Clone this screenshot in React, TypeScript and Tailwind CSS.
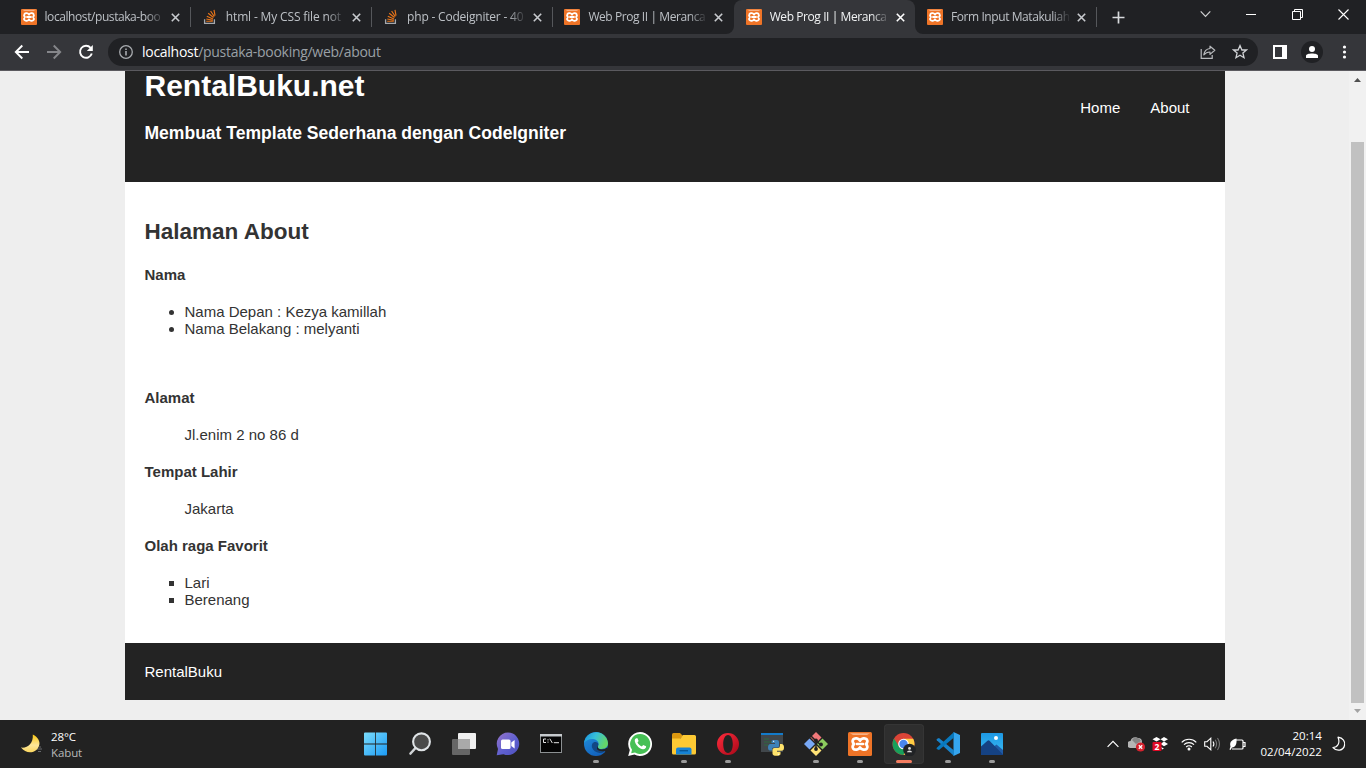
import React from "react";

const ui = "font-['Open_Sans','Noto_Sans',sans-serif]";

function Xampp({ size }: { size: number }) {
  return (
    <svg width={size} height={size} viewBox="0 0 24 24" className="shrink-0">
      <rect width="24" height="24" rx="1.5" fill="#ef7427" />
      <path d="M2 1.2H22L19 3H5Z" fill="#f8b184" />
      <path
        d="M12 8.6C10.8 6 6.6 5.6 5.2 7.4C4.2 8.9 4.7 10.6 6 12C4.7 13.4 4.2 15.1 5.2 16.6C6.6 18.4 10.8 18 12 15.4C13.2 18 17.4 18.4 18.8 16.6C19.8 15.1 19.3 13.4 18 12C19.3 10.6 19.8 8.9 18.8 7.4C17.4 5.6 13.2 6 12 8.6ZM9 12H15"
        fill="none"
        stroke="#fff"
        strokeWidth="2.7"
        strokeLinejoin="round"
        strokeLinecap="round"
      />
    </svg>
  );
}

function StackOverflow() {
  return (
    <svg width="16" height="16" viewBox="0 0 16 16" fill="none" className="shrink-0">
      <path d="M2.6 10.3V14.4H12.4V10.3" stroke="#a5a8ac" strokeWidth="1.3" />
      <path
        d="M4.2 12.2H10.8M4.3 10L10.8 11.2M4.8 7.2L11 10M6.2 4.2L11.5 8.5M8.6 2L12.3 7.5M12 .8L13 6.7"
        stroke="#e8751a"
        strokeWidth="1.15"
      />
    </svg>
  );
}

type TabInfo = { title: string; so?: boolean; active?: boolean; sep?: boolean; spacing: string };
const tabs: TabInfo[] = [
  { title: "localhost/pustaka-boo", sep: true, spacing: "tracking-[-0.42px]" },
  { title: "html - My CSS file not", so: true, sep: true, spacing: "tracking-[-0.15px]" },
  { title: "php - Codeigniter - 40", so: true, sep: true, spacing: "tracking-[-0.2px]" },
  { title: "Web Prog II | Meranca", spacing: "tracking-[-0.42px]" },
  { title: "Web Prog II | Meranca", active: true, spacing: "tracking-[-0.42px]" },
  { title: "Form Input Matakuliah", sep: true, spacing: "tracking-[-0.42px]" },
];

function Tab({ t }: { t: TabInfo }) {
  return (
    <div
      className={
        "relative flex h-[34px] w-[181.3px] shrink-0 items-center pl-3 " +
        (t.active ? "rounded-t-lg bg-[#35363a] text-[#f1f3f4]" : "text-[#bdc1c6]")
      }
    >
      {t.active && (
        <>
          <svg width="8" height="8" className="absolute bottom-0 -left-2">
            <path d="M8 0V8H0A8 8 0 0 0 8 0" fill="#35363a" />
          </svg>
          <svg width="8" height="8" className="absolute -right-2 bottom-0">
            <path d="M0 0V8H8A8 8 0 0 1 0 0" fill="#35363a" />
          </svg>
        </>
      )}
      {t.so ? <StackOverflow /> : <Xampp size={16} />}
      <span
        className={
          "ml-2 w-[120px] text-[12px] leading-4 whitespace-nowrap [mask-image:linear-gradient(to_right,black_84%,transparent)] " +
          t.spacing
        }
      >
        {t.title}
      </span>
      <svg width="9" height="9" viewBox="0 0 9 9" className="ml-1.5 shrink-0">
        <path d="M.8 .8L8.2 8.2M8.2 .8L.8 8.2" stroke={t.active ? "#fff" : "#c8cbcf"} strokeWidth="1.6" />
      </svg>
      {t.sep && <i className="absolute top-[7px] -right-[1px] h-5 w-px bg-[#55575b]" />}
    </div>
  );
}

function TabStrip() {
  return (
    <div className="flex h-[34px] bg-[#202124] pl-[8.5px]">
      {tabs.map((t, i) => (
        <Tab key={i} t={t} />
      ))}
      <div className="flex flex-1 items-center pl-[16px]">
        <svg width="13" height="13">
          <path d="M6.5 .5V12.5M.5 6.5H12.5" stroke="#d8dadd" strokeWidth="1.7" />
        </svg>
      </div>
      <div className="flex h-7">
        <div className="flex w-[46px] items-center justify-center">
          <svg width="11" height="8" fill="none">
            <path d="M.7 1.3L5.5 6.3L10.3 1.3" stroke="#d0d0d2" strokeWidth="1.2" />
          </svg>
        </div>
        <div className="flex w-[46px] items-center justify-center">
          <i className="mt-px h-px w-[10px] bg-white" />
        </div>
        <div className="flex w-[46px] items-center justify-center">
          <svg width="11" height="11" fill="none" stroke="#fff">
            <path d="M.5 2.5H8.5V10.5H.5ZM2.5 2.5V.5H10.5V8.5H8.5" />
          </svg>
        </div>
        <div className="flex w-[46px] items-center justify-center">
          <svg width="11" height="11" stroke="#fff" strokeWidth="1.1">
            <path d="M.5 .5L10.5 10.5M10.5 .5L.5 10.5" />
          </svg>
        </div>
      </div>
    </div>
  );
}

function Toolbar() {
  return (
    <div className="flex h-[37px] items-center border-b border-[#5b5a5f] bg-[#35363a] pr-3 pl-3.5">
      <svg width="16" height="16" viewBox="0 0 16 16" fill="none" stroke="#fff" strokeWidth="1.9">
        <path d="M15 8H2M8.3 1.5L1.8 8L8.3 14.5" />
      </svg>
      <svg width="16" height="16" viewBox="0 0 16 16" fill="none" stroke="#85868a" strokeWidth="1.9" className="ml-4">
        <path d="M1 8H14M7.7 1.5L14.2 8L7.7 14.5" />
      </svg>
      <svg width="16" height="16" viewBox="0 0 16 16" fill="none" className="ml-4">
        <path d="M12.6 3.8A6 6 0 1 0 13.8 9.5" stroke="#fff" strokeWidth="1.9" />
        <path d="M14.8 1V7H8.8Z" fill="#fff" />
      </svg>
      <div className="ml-[14px] flex h-7 flex-1 items-center rounded-full bg-[#202124] pr-2.5 pl-2.5">
        <svg width="16" height="16" viewBox="0 0 16 16" fill="none">
          <circle cx="8" cy="8" r="6.3" stroke="#a8abaf" strokeWidth="1.3" />
          <path d="M8 7V11.5M8 4.4V5.9" stroke="#a8abaf" strokeWidth="1.6" />
        </svg>
        <span className="ml-2 flex-1 text-[14px] leading-5 tracking-[-0.28px] text-[#9aa0a6]">
          <span className="text-white">localhost</span>/pustaka-booking/web/about
        </span>
        <svg width="16" height="16" viewBox="0 0 16 16" fill="none" stroke="#b8babd" strokeWidth="1.2">
          <path d="M1.2 5V14.4H12.2V11" />
          <path d="M10 2.2L14.8 6.3L10 10.4V8C7.5 8 5.5 8.8 3.8 10.8C4.3 7.4 6.2 4.9 10 4.5Z" strokeLinejoin="round" />
        </svg>
        <svg width="16" height="16" viewBox="0 0 16 16" fill="none" className="ml-4">
          <path
            d="M8 1.6L9.9 6H14.5L10.9 9L12 13.7L8 11.2L4 13.7L5.1 9L1.5 6H6.1Z"
            stroke="#d0d2d5"
            strokeWidth="1.3"
          />
        </svg>
      </div>
      <svg width="14" height="14" className="ml-[15px]">
        <path d="M0 0H14V14H0ZM2 2V12H9V2Z" fill="#fff" fillRule="evenodd" />
      </svg>
      <div className="ml-3.5 flex size-[22px] items-center justify-center rounded-full bg-[#202124]">
        <svg width="12" height="12" fill="#fff">
          <circle cx="6" cy="3" r="3" />
          <path d="M0 12V10C0 6.8 12 6.8 12 10V12Z" />
        </svg>
      </div>
      <svg width="20" height="14" fill="#fff" className="ml-[11px]">
        <circle cx="10.5" cy="2" r="1.6" />
        <circle cx="10.5" cy="7" r="1.6" />
        <circle cx="10.5" cy="12" r="1.6" />
      </svg>
    </div>
  );
}

function Page() {
  return (
    <div className="flex h-[649px] bg-[#eeeeee]">
      <main className="ml-[125px] w-[1100px] overflow-hidden font-['Liberation_Sans',Arial,sans-serif] text-[15px] leading-[17px] text-[#333]">
        <header className="flex h-[111px] justify-between bg-[#232323] pr-[35.5px] pl-[19.5px] text-white">
          <div className="-mt-0.5">
            <h1 className="text-[30px] leading-[34px] font-bold">RentalBuku.net</h1>
            <h3 className="mt-[20px] text-[17.55px] leading-5 font-bold">Membuat Template Sederhana dengan CodeIgniter</h3>
          </div>
          <nav className="mt-7 flex gap-[30px]">
            <span>Home</span>
            <span>About</span>
          </nav>
        </header>
        <section className="h-[461px] bg-white px-[19.5px] pt-[37px]">
          <h2 className="text-[22.5px] leading-[26px] font-bold">Halaman About</h2>
          <h4 className="mt-[21px] font-bold">Nama</h4>
          <ul className="mt-5 list-disc pl-10">
            <li>Nama Depan : Kezya kamillah</li>
            <li>Nama Belakang : melyanti</li>
          </ul>
          <h4 className="mt-[52px] font-bold">Alamat</h4>
          <p className="mt-5 pl-10">Jl.enim 2 no 86 d</p>
          <h4 className="mt-5 font-bold">Tempat Lahir</h4>
          <p className="mt-5 pl-10">Jakarta</p>
          <h4 className="mt-5 font-bold">Olah raga Favorit</h4>
          <ul className="mt-5 list-[square] pl-10">
            <li>Lari</li>
            <li>Berenang</li>
          </ul>
        </section>
        <footer className="h-[57px] bg-[#232323] px-[19.5px] pt-5 text-white">RentalBuku</footer>
      </main>
      <div className="ml-auto flex w-[17px] flex-col items-center bg-[#f1f1f1]">
        <svg width="17" height="17">
          <path d="M5 11L8.5 7L12 11Z" fill="#505050" />
        </svg>
        <div className="mt-[54px] h-[561px] w-[13px] bg-[#c1c1c1]" />
        <svg width="17" height="17">
          <path d="M5 6L8.5 10L12 6Z" fill="#a3a3a3" />
        </svg>
      </div>
    </div>
  );
}

const apps: { icon: React.ReactNode; run?: boolean; active?: boolean }[] = [
  {
    icon: (
      <>
        <defs>
          <linearGradient id="win" x1="0" y1="0" x2="1" y2="1">
            <stop offset="0" stopColor="#7bdcfb" />
            <stop offset="1" stopColor="#1b9af5" />
          </linearGradient>
        </defs>
        <path d="M0 1.5Q0 .5 1 .5H11.2V11.6H0ZM12 .5H22Q23 .5 23 1.5V11.6H12ZM0 12.5H11.2V23.5H1Q0 23.5 0 22.5ZM12 12.5H23V22.5Q23 23.5 22 23.5H12Z" fill="url(#win)" />
      </>
    ),
  },
  {
    icon: (
      <>
        <path d="M7.5 16L2.5 21.5" stroke="#d0d3d6" strokeWidth="2.6" strokeLinecap="round" />
        <circle cx="13.5" cy="9.8" r="8.4" fill="#4a4a4a" stroke="#dfe3e6" strokeWidth="2.1" />
      </>
    ),
  },
  {
    icon: (
      <>
        <rect x="6" y="1" width="18" height="16" rx="1" fill="#f0f0f0" />
        <rect x="0" y="7" width="18" height="16" rx="1" fill="#666" />
        <path d="M6 7H18V17H6Z" fill="#a9a9a9" />
      </>
    ),
  },
  {
    icon: (
      <>
        <defs>
          <linearGradient id="chat" x1="0" y1="0" x2="1" y2="1">
            <stop offset="0" stopColor="#9674ca" />
            <stop offset=".55" stopColor="#5f60cf" />
            <stop offset="1" stopColor="#4d50bd" />
          </linearGradient>
        </defs>
        <path d="M12 .5A11.3 11.3 0 1 1 7.5 22.2L.7 23.2L2 17A11.3 11.3 0 0 1 12 .5Z" fill="url(#chat)" />
        <rect x="5" y="7.5" width="9.5" height="9.5" rx="1.5" fill="#fff" />
        <path d="M15.3 10.6L18.6 8V16.5L15.3 14Z" fill="#fff" />
      </>
    ),
  },
  {
    icon: (
      <>
        <rect x="0.5" y="2.5" width="21" height="18" fill="#050505" stroke="#8c9092" />
        <path d="M0 2H22V4.500H0Z" fill="#c7cbce" />
        <path d="M6 7H3.500V10.500H6M8 7.200V8.400M8 9.600V10.700M9.800 6.700L12.300 11M13.800 10.700H19" stroke="#e4e4e4" fill="none" />
      </>
    ),
  },
  {
    run: true,
    icon: (
      <>
        <defs>
          <linearGradient id="edge" x1="0" y1="0" x2="1" y2=".35">
            <stop offset="0" stopColor="#1791df" />
            <stop offset=".5" stopColor="#37bfd8" />
            <stop offset="1" stopColor="#64d568" />
          </linearGradient>
          <linearGradient id="edge2" x1="0" y1="0" x2=".6" y2="1">
            <stop offset="0" stopColor="#2292dd" />
            <stop offset="1" stopColor="#1261bd" />
          </linearGradient>
        </defs>
        <circle cx="12" cy="12" r="12" fill="url(#edge2)" />
        <path d="M.1 11A12 12 0 0 1 24 11.3C24 15 21 17 17.5 17C14 17 13 15.5 14.3 13.5C15.5 10.5 13 7.5 9 7C5 6.7 1.5 8.5 .1 11Z" fill="url(#edge)" />
        <path d="M8 15.5C7.3 12 9 9.8 11.7 10C14 10.2 15 12 14 14C13.5 16 15 17.6 18 17.6C20 17.6 21.5 17 22.3 16.8C21 20 18.5 21.3 15.5 21C12 20.5 9 18.5 8 15.5Z" fill="#124785" />
        <path d="M14 14C13.1 16 14.7 17.6 18 17.6C20.2 17.6 22 16.5 22.7 15.8L23.8 17L22 20L20.5 19C15 20 11 17.5 14 14Z" fill="#222" />
      </>
    ),
  },
  {
    icon: (
      <>
        <path d="M12 0A12 12 0 1 1 6.4 22.6L.2 24L1.8 18A12 12 0 0 1 12 0Z" fill="#fff" />
        <path d="M12.2 2A10 10 0 1 1 7 20.5L3.2 21.3L4 17.8A10 10 0 0 1 12.2 2Z" fill="#46c055" />
        <path d="M8.3 6.2C7 6.5 6.4 8.2 7 10C8.4 13.8 11.5 16.8 15 17.3C17 17.4 18.3 16 18.1 14.3L15.2 12.9L13.8 14.5C11.8 13.7 10.3 12.1 9.5 10.5L10.6 9.1L9.5 6.3Z" fill="#fff" />
      </>
    ),
  },
  {
    run: true,
    icon: (
      <>
        <path d="M0 2.5Q0 1 1.5 1H8L11 4L8 7H0Z" fill="#dc9810" />
        <path d="M0 6.5H8.5L11 3H22.5Q24 3 24 4.5V21Q24 22.5 22.5 22.5H1.5Q0 22.5 0 21Z" fill="#fcc934" />
        <path d="M4 22.5V17.5Q4 15.5 6 15.5H17.5Q19.5 15.5 19.5 17.5V22.5Z" fill="#1683d5" />
        <path d="M7.5 18.7H16" stroke="#075798" strokeWidth="1.4" />
      </>
    ),
  },
  {
    run: true,
    icon: (
      <>
        <defs>
          <linearGradient id="opera" x1="0" y1="0" x2="1" y2="1">
            <stop offset="0" stopColor="#ff2d3d" />
            <stop offset="1" stopColor="#a70718" />
          </linearGradient>
        </defs>
        <path d="M12 1A11 11 0 1 1 12 23A11 11 0 1 1 12 1ZM12 3C9 3 7.2 7 7.2 12C7.2 17 9 21 12 21C15 21 16.8 17 16.8 12C16.8 7 15 3 12 3Z" fillRule="evenodd" fill="url(#opera)" />
      </>
    ),
  },
  {
    icon: (
      <>
        <rect x="1" y="1" width="22" height="19" fill="#41474b" />
        <path d="M1 1H23V3H1Z" fill="#137bca" />
        <path d="M4 7H9M4 10H12M4 13H8" stroke="#2f6a40" strokeWidth="1.2" />
        <path d="M13 8H17Q19 8 19 10V14Q19 15.5 17 15.5H13.5Q12 15.5 12 17V18.5H10Q8 18.5 8 15.5Q8 12 10.5 12H15V11H11.5V9.5Q11.5 8 13 8Z" fill="#3d82b8" />
        <path d="M20 12H21.5Q24 12 24 15.5Q24 18.7 21.5 18.7H17V19.7H20.5V22Q20.5 23.8 16.5 23.8Q12.5 23.8 12.5 21.5V17.8Q12.5 16 14.5 16H18Q20 16 20 14Z" fill="#ffe36b" />
        <path d="M13 9.3H14.2M17.8 22.3H19" stroke="#fff" />
      </>
    ),
  },
  {
    run: true,
    icon: (
      <>
        <path d="M12 0L17.5 5.5L12 11L6.5 5.5Z" fill="#f2787a" />
        <path d="M18.5 6.5L24 12L18.5 17.5L13 12Z" fill="#8ccc5e" />
        <path d="M5.5 6.5L11 12L5.5 17.5L0 12Z" fill="#78a8f5" />
        <path d="M12 13L17.5 18.5L12 24L6.5 18.5Z" fill="#ffe276" />
        <path d="M7 4L12 9V18M12 9L17 13" stroke="#202020" strokeWidth="1.5" fill="none" />
        <circle cx="12" cy="8.500" r="1.900" fill="#202020" />
        <circle cx="12" cy="17" r="1.900" fill="#202020" />
        <circle cx="17" cy="12.500" r="1.900" fill="#202020" />
      </>
    ),
  },
  { run: true, icon: <Xampp size={24} /> },
  {
    active: true,
    icon: (
      <>
        <circle cx="11.5" cy="12" r="11" fill="#db4437" />
        <path d="M2 6.5A11 11 0 0 0 11.5 23L16 14.5L11.5 12L7 14.5Z" fill="#18a05b" />
        <path d="M11.5 6.8H21.2A11 11 0 0 1 11.5 23L16 14.5Z" fill="#ffcd43" />
        <circle cx="11.5" cy="12" r="5.3" fill="#fff" />
        <circle cx="11.5" cy="12" r="4.2" fill="#4886ee" />
        <circle cx="17.5" cy="18" r="6.3" fill="#202225" />
        <circle cx="17.5" cy="16.4" r="1.4" fill="#ddd" />
        <path d="M14.9 20.3Q15 18.4 17.5 18.4T20.1 20.3Z" fill="#ddd" />
      </>
    ),
  },
  {
    run: true,
    icon: (
      <>
        <path d="M17.5 0L24 3V21L17.5 24Z" fill="#35a5ee" />
        <path d="M1.2 6.7L3 6L18 18.5V24L.8 8.3Q0 7.5 1.2 6.7Z" fill="#1883cb" />
        <path d="M1.2 17.3L3 18L18 5.5V0L.8 15.7Q0 16.5 1.2 17.3Z" fill="#0879be" />
      </>
    ),
  },
  {
    run: true,
    icon: (
      <>
        <defs>
          <linearGradient id="photo" x1="0" y1="0" x2="0" y2="1">
            <stop offset="0" stopColor="#1d98e4" />
            <stop offset="1" stopColor="#3bbcf3" />
          </linearGradient>
        </defs>
        <rect x="1" y="1" width="22" height="22" rx="1" fill="url(#photo)" />
        <path d="M12 16L16.500 12.500L23 18V23H12Z" fill="#1f5ba5" />
        <path d="M1 14.500L7.500 8.700Q8.500 8 9.500 8.700L23 22.500V23H1Z" fill="#154283" />
        <circle cx="16" cy="6" r="2" fill="#fff" />
      </>
    ),
  },
];

function Taskbar() {
  return (
    <div className="flex h-12 items-center bg-[#222222] text-white">
      <div className="flex w-[353.5px] items-center pl-[21px]">
        <svg width="24" height="22" viewBox="0 0 24 22">
          <defs>
            <linearGradient id="moon" x1="0" y1="0" x2="0" y2="1">
              <stop offset="0" stopColor="#fac60f" />
              <stop offset=".6" stopColor="#fce69a" />
              <stop offset="1" stopColor="#fbd65d" />
            </linearGradient>
          </defs>
          <path d="M16 16H21M17 18.5H20M18 14H20" stroke="#66696c" strokeWidth="1.2" fill="none" />
          <path d="M11.8 1.5C17 4 20 9 17.8 13.5C15 20.5 5 21.500 0 14.500C6 15.500 12.500 11 11.800 1.500Z" fill="url(#moon)" />
        </svg>
        <div className="mt-0.5 ml-[6px] text-[11.5px] leading-4 tracking-[-0.1px]">
          <div>28°C</div>
          <div className="text-[#b9b9b9]">Kabut</div>
        </div>
      </div>
      {apps.map((a, i) => (
        <div key={i} className="flex h-12 w-11 shrink-0 items-center justify-center">
          <div
            className={
              "relative flex h-10 w-10 items-center justify-center rounded " +
              (a.active ? "bg-[#2e2e2e] ring-1 ring-[#353535] ring-inset" : "")
            }
          >
            <svg width="24" height="24" viewBox="0 0 24 24">
              {a.icon}
            </svg>
            {a.run && <i className="absolute bottom-[1px] left-[17px] h-[3px] w-[6px] rounded-full bg-[#9b9b9b]" />}
            {a.active && <i className="absolute bottom-[1px] left-3 h-[3px] w-4 rounded-full bg-[#f47d61]" />}
          </div>
        </div>
      ))}
      <div className="ml-auto flex items-center pr-[20px]">
        <svg width="12" height="8" fill="none">
          <path d="M.6 6.8L6 1.3L11.4 6.8" stroke="#fff" strokeWidth="1.2" />
        </svg>
        <svg width="18" height="16" viewBox="0 0 18 16" className="ml-[9px]">
          <path d="M3 12A3.500 3.500 0 0 1 2.500 5A5 5 0 0 1 10 2A4 4 0 0 1 14 6V12Z" fill="#b5b5b5" />
          <path d="M4 4A5 5 0 0 1 13 5L8 8Z" fill="#858585" />
          <circle cx="12.500" cy="11" r="4.600" fill="#d5222e" />
          <path d="M10.800 9.300L14.200 12.700M14.200 9.300L10.800 12.700" stroke="#fff" strokeWidth="1.300" />
        </svg>
        <svg width="17" height="16" viewBox="0 0 17 16" className="ml-[6px]">
          <path d="M4.500 1L8.500 3.200L4.500 5.500L.5 3.200ZM12 1L16 3.200L12 5.500L8.500 3.200ZM12 5.500L16 8L12 10.200L8.500 8ZM9 11L12 12.500L10 13.500Z" fill="#fff" />
          <rect x=".5" y="6" width="9" height="9" rx="1" fill="#df0a25" />
          <text x="5" y="13.800" textAnchor="middle" fontSize="8.500" fontWeight="700" fill="#fff" fontFamily="Open Sans">
            2
          </text>
        </svg>
        <svg width="16" height="14" viewBox="0 0 16 14" fill="none" stroke="#fff" strokeWidth="1.200" className="ml-[12px]">
          <path d="M.7 5.300A10.300 10.300 0 0 1 15.300 5.300M3 7.700A7 7 0 0 1 13 7.700M5.200 10A4 4 0 0 1 10.800 10" />
          <circle cx="8" cy="12" r=".9" fill="#fff" />
        </svg>
        <svg width="17" height="14" viewBox="0 0 17 14" fill="none" stroke="#fff" strokeWidth="1.100" className="ml-[7px]">
          <path d="M.7 4.700H3L6.800 1.200V12.800L3 9.300H.7Z" />
          <path d="M9 4.500Q10.800 7 9 9.500" />
          <path d="M11.200 2.800Q14 7 11.200 11.200M13.500 1Q17.500 7 13.500 13" stroke="#777" />
        </svg>
        <svg width="17" height="13" viewBox="0 0 17 13" fill="none" className="ml-[8px]">
          <path d="M6 2H13Q14 2 14 3V10Q14 11 13 11H3M14.500 4.500H16V8.500H14.500" stroke="#fff" strokeWidth="1.200" />
          <path d="M7.500 .5C2 2 .5 4.500 1.500 8.500L.5 11.500L1.500 12L3 9.500C6.500 9.500 8 6 7.500 .5Z" fill="#fff" />
        </svg>
        <div className="ml-[10px] w-[66px] text-right text-[11.5px] leading-4 tracking-[0.05px]">
          <div>20:14</div>
          <div>02/04/2022</div>
        </div>
        <svg width="14" height="16" viewBox="0 0 14 16" fill="none" className="ml-[10px]">
          <path d="M6 1.200C11 2 13.500 5.500 12.500 9.500C11.300 14.500 5 16 1 11.500C5.500 11.500 8.500 7 6 1.200Z" stroke="#fff" strokeWidth="1.200" strokeLinejoin="round" />
        </svg>
      </div>
    </div>
  );
}

export default function App() {
  return (
    <div className={"h-[768px] w-[1366px] overflow-hidden " + ui}>
      <TabStrip />
      <Toolbar />
      <Page />
      <Taskbar />
    </div>
  );
}
